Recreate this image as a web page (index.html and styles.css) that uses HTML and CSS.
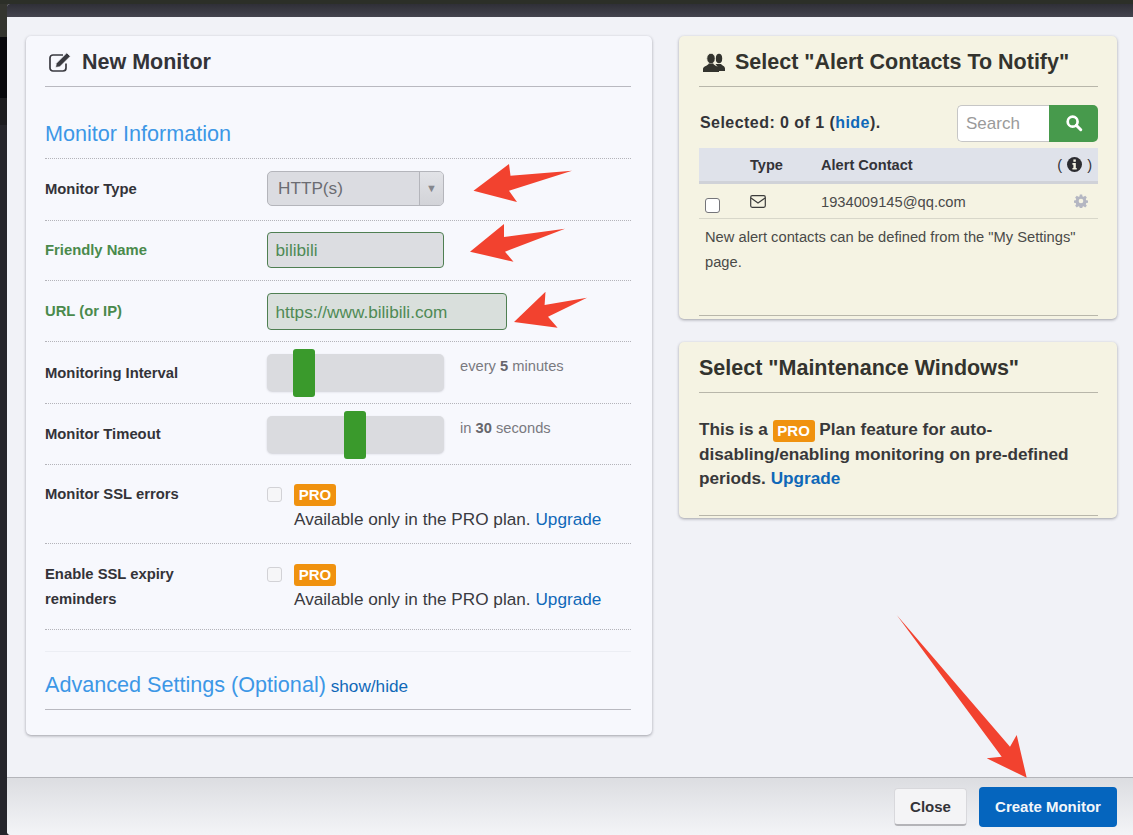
FILE: index.html
```html
<!DOCTYPE html>
<html lang="en">
<head>
<meta charset="utf-8">
<title>New Monitor</title>
<link rel="stylesheet" href="styles.css">
</head>
<body>
<div class="modal">
  <div class="modal-top"></div>
  <div class="modal-body">
    <section class="card card-main">
      <h2 class="card-title">
        <svg class="ic-edit" viewBox="0 0 23 20" width="23" height="20"><path d="M17 11.500V16a3 3 0 0 1-3 3H4a3 3 0 0 1-3-3V6a3 3 0 0 1 3-3h10" fill="none" stroke="#3a3a40" stroke-width="1.700"/><path d="M6.500 15.500l.8-4.200L17.800.8l3.600 3.500L10.800 14.800z" fill="#3a3a40" stroke="#f7f8fd" stroke-width=".8"/></svg>
        New Monitor
      </h2>
      <h3 class="section-title first">Monitor Information</h3>
      <div class="row r62">
        <div class="lbl">Monitor Type</div>
        <div class="select"><span class="select-val">HTTP(s)</span><span class="select-btn">▼</span></div>
      </div>
      <div class="row r60">
        <div class="lbl ok">Friendly Name</div>
        <div class="input w177 h36">bilibili</div>
      </div>
      <div class="row r61">
        <div class="lbl ok">URL (or IP)</div>
        <div class="input w240 h37 tint">https://www.bilibili.com</div>
      </div>
      <div class="row r62">
        <div class="lbl low">Monitoring Interval</div>
        <div class="slider"><span class="thumb" style="left:26px"></span></div>
        <div class="hint">every <b>5</b> minutes</div>
      </div>
      <div class="row r61">
        <div class="lbl">Monitor Timeout</div>
        <div class="slider"><span class="thumb" style="left:77px"></span></div>
        <div class="hint">in <b>30</b> seconds</div>
      </div>
      <div class="row top r79">
        <div class="lbl">Monitor SSL errors</div>
        <span class="check"></span>
        <div class="pro-block"><span class="pro">PRO</span><p>Available only in the PRO plan. <a href="#">Upgrade</a></p></div>
      </div>
      <div class="row top r86">
        <div class="lbl">Enable SSL expiry<br>reminders</div>
        <span class="check"></span>
        <div class="pro-block"><span class="pro">PRO</span><p>Available only in the PRO plan. <a href="#">Upgrade</a></p></div>
      </div>
      <hr class="soft">
      <div class="advanced"><span class="section-title">Advanced Settings (Optional)</span> <a href="#">show/hide</a></div>
    </section>

    <div class="side">
      <section class="card card-cream contacts">
        <h2 class="card-title cream-title">
          <svg viewBox="0 0 22 19" width="22" height="19"><ellipse cx="16" cy="5.500" rx="3.200" ry="4.700" fill="#33332e"/><path d="M12.500 11h5.500c1 1.500 4 2 4 4.500V18h-6l-2-5z" fill="#33332e"/><ellipse cx="8" cy="5.500" rx="4.200" ry="5.200" fill="#33332e" stroke="#f5f3e3" stroke-width=".8"/><path d="M5.700 10.500h4.600c.2 2 5.700 2.700 5.700 5.500v3H0v-3c0-2.800 5.500-3.500 5.700-5.500z" fill="#33332e"/></svg>
          Select "Alert Contacts To Notify"
        </h2>
        <div class="sel-bar">
          <div class="sel-text">Selected: 0 of 1 (<a href="#">hide</a>).</div>
          <div class="search">
            <span class="search-field">Search</span>
            <span class="search-btn"><svg viewBox="0 0 20 20" width="18" height="18"><circle cx="8.500" cy="8.500" r="5.500" fill="none" stroke="#fff" stroke-width="3"/><path d="M12.500 12.500l5 5" stroke="#fff" stroke-width="3.400" stroke-linecap="round"/></svg></span>
          </div>
        </div>
        <div class="thead">
          <span class="c-type">Type</span>
          <span class="c-name">Alert Contact</span>
          <span class="c-info">( <svg viewBox="0 0 16 16" width="15" height="15"><circle cx="8" cy="8" r="8" fill="#2c2c30"/><rect x="6.800" y="2.600" width="2.600" height="2.500" fill="#f4f2e2"/><path d="M5.800 6.500h3.600v5.200h1v1.700H5.800v-1.700h1V8.200h-1z" fill="#f4f2e2"/></svg> )</span>
        </div>
        <div class="trow">
          <span class="box"></span>
          <span class="c-type"><svg viewBox="0 0 16 13" width="16" height="13"><rect x=".7" y=".7" width="14.600" height="11.600" rx="1.500" fill="none" stroke="#3c3c3c" stroke-width="1.200"/><path d="M1 3l7 5 7-5" fill="none" stroke="#3c3c3c" stroke-width="1.200"/></svg></span>
          <span class="c-name email">1934009145@qq.com</span>
          <span class="c-gear"><svg viewBox="0 0 24 24" width="14" height="14"><path d="M10 1h4l.6 3.100 1.900.8 2.700-1.800 2.800 2.800-1.800 2.700.8 1.900 3 .5v4l-3 .6-.8 1.900 1.800 2.700-2.800 2.800-2.700-1.800-1.900.8-.6 3h-4l-.6-3-1.900-.8-2.700 1.800-2.800-2.800 1.800-2.700-.8-1.900-3-.6v-4l3-.5.800-1.900-1.800-2.700 2.800-2.800 2.700 1.800 1.900-.8zM12 8a4 4 0 1 0 0 8 4 4 0 0 0 0-8z" fill="#b4b6c2"/></svg></span>
        </div>
        <p class="note">New alert contacts can be defined from the "My Settings" page.</p>
      </section>

      <section class="card card-cream maint">
        <h2 class="card-title cream-title">Select "Maintenance Windows"</h2>
        <p class="maint-text">This is a <span class="pro inline">PRO</span> Plan feature for auto-disabling/enabling monitoring on pre-defined periods. <a href="#">Upgrade</a></p>
      </section>
    </div>
  </div>
  <div class="modal-foot">
    <button class="btn btn-close">Close</button>
    <button class="btn btn-create">Create Monitor</button>
  </div>
</div>

<svg class="arrows" viewBox="0 0 1133 835" width="1133" height="835">
  <polygon points="473.500,190.700 509,164 510.500,175.700 572,170.700 509,190.700 517,202"/>
  <polygon points="470,251.700 504,224 504,237 565,228.700 505,251.700 513.500,261.700"/>
  <polygon points="514,322 545.500,291.700 544.600,305 587,297.700 548,316.700 557.600,327.700"/>
  <polygon points="896.700,615 1010,746.700 1016.700,735 1026.700,777.700 986.700,758.300 1001.700,756.700"/>
</svg>
</body>
</html>
```

FILE: styles.css
```css
* { box-sizing: border-box; }
html, body { margin: 0; height: 835px; overflow: hidden; }
body {
  position: relative;
  background: linear-gradient(#2c2f28 4px, #34352f 4px, #34352f 37px, #08080c 37px, #08080c 98px, #1c1c1f 98px, #1c1c1f 125px, #25252b 125px);
  font-family: "Liberation Sans", Arial, sans-serif;
  color: #333338;
}
a { color: #0f68b8; text-decoration: none; }
p { margin: 0; }

.modal {
  height: 831px;
  margin: 4px 0 0 7px;
  display: flex;
  flex-direction: column;
  background: #f1f2f7;
  border-radius: 3px 0 0 4px;
  overflow: hidden;
}
.modal-top {
  height: 13px;
  background: linear-gradient(#2f2f37, #44444e);
}
.modal-body {
  flex: 1;
  display: flex;
  align-items: flex-start;
  gap: 27px;
  padding: 19px 16px 0 19px;
}
.card {
  border-radius: 5px;
  box-shadow: 0 1px 3px rgba(60, 60, 70, .45);
}
.card-main {
  width: 626px;
  height: 699px;
  padding: 0 21px 0 19px;
  background: #f7f8fd;
}
.card-title {
  display: flex;
  align-items: center;
  gap: 10px;
  height: 51px;
  margin: 0;
  padding: 2px 0 0 4px;
  border-bottom: 1px solid #b9b9c0;
  font-size: 21.500px;
  font-weight: 700;
  color: #333338;
}
.section-title {
  font-size: 21.600px;
  font-weight: 400;
  color: #3c97e6;
}
.section-title.first {
  height: 72px;
  margin: 0;
  padding-top: 34px;
  line-height: 26px;
  border-bottom: 1px dotted #b4b4ba;
}
.row {
  display: flex;
  align-items: center;
  border-bottom: 1px dotted #b4b4ba;
}
.row.top { align-items: flex-start; padding-top: 20px; }
.row.r79 { padding-top: 19px; }
.row.top .lbl { margin-top: -2px; }
.r60 { height: 60px; }
.r61 { height: 61px; }
.r62 { height: 62px; }
.r79 { height: 79px; }
.r86 { height: 86px; }
.lbl {
  flex: none;
  width: 222px;
  font-size: 14.800px;
  font-weight: 700;
  line-height: 25px;
  color: #333338;
}
.lbl.ok { color: #4a8a4c; }
.lbl.low { margin-top: 2px; }
.select {
  display: flex;
  width: 177px;
  height: 35px;
  margin-bottom: 2px;
  border: 1px solid #b4b5bb;
  border-radius: 5px;
  background: #dbdce1;
  color: #6b6c72;
  font-size: 17.200px;
  overflow: hidden;
}
.select-val { flex: 1; padding-left: 10px; line-height: 32px; }
.select-btn {
  width: 24px;
  border-left: 1px solid #b4b5bb;
  background: linear-gradient(#e2e3e7, #d2d3d8);
  color: #85868c;
  font-size: 11px;
  line-height: 33px;
  text-align: center;
}
.input {
  border: 1px solid #4f7f52;
  border-radius: 4px;
  background: #dcdde1;
  color: #4f8a55;
  font-size: 17.200px;
  padding-left: 7.500px;
}
.w177 { width: 177px; }
.w240 { width: 240px; }
.h36 { height: 36px; line-height: 35px; margin-bottom: 2px; }
.h37 { height: 37px; line-height: 36px; }
.tint { background: #d9dfdc; }
.slider {
  position: relative;
  flex: none;
  width: 177px;
  height: 37px;
  border-radius: 5px;
  background: #dadbdf;
  box-shadow: 0 1px 2px rgba(120, 120, 130, .3);
}
.thumb {
  position: absolute;
  top: -5px;
  width: 22px;
  height: 48px;
  border-radius: 3px;
  background: #3a9a2c;
}
.hint {
  align-self: flex-start;
  margin: 16px 0 0 16px;
  font-size: 14.700px;
  color: #7a7a80;
}
.hint b { color: #66666c; }
.check {
  flex: none;
  width: 15px;
  height: 15px;
  margin: 3px 12px 0 0;
  border: 1px solid #d2d2d6;
  border-radius: 3px;
  background: #f6f6f8;
}
.pro-block { font-size: 17.200px; line-height: 24px; color: #3a3a40; }
.pro-block p { margin-top: 1px; }
.pro {
  display: block;
  width: 42px;
  height: 22px;
  border-radius: 3px;
  background: #f0920f;
  color: #fff;
  font-size: 15px;
  font-weight: 700;
  line-height: 22px;
  text-align: center;
}
.pro.inline { display: inline-block; vertical-align: -1px; }
.soft { height: 1px; margin: 21px 0 0; border: 0; background: #eceef4; }
.advanced {
  height: 58px;
  padding-top: 18px;
  border-bottom: 1px solid #b9b9c0;
  line-height: 30px;
  font-size: 17.200px;
}

.side {
  flex: none;
  width: 438px;
  display: flex;
  flex-direction: column;
  gap: 23px;
}
.card-cream {
  padding: 0 19px 0 20px;
  background: #f5f3e3;
}
.cream-title { padding-left: 0; color: #33332e; border-bottom-color: #b8b6aa; }
.contacts { height: 283px; position: relative; }
.contacts::after, .maint::after {
  content: "";
  position: absolute;
  left: 20px;
  right: 19px;
  height: 1px;
  background: #b8b6aa;
}
.contacts::after { bottom: 3px; }
.maint::after { bottom: 2px; }
.maint { height: 176px; position: relative; }
.contacts .cream-title { padding-left: 4px; }
.sel-bar {
  display: flex;
  align-items: center;
  justify-content: space-between;
  height: 61px;
  padding: 11px 0 0 1px;
}
.sel-text { font-size: 16px; font-weight: 700; letter-spacing: .45px; color: #333338; }
.search { display: flex; height: 37px; }
.search-field {
  width: 92px;
  padding-left: 8px;
  border: 1px solid #c6c6c6;
  border-right: 0;
  border-radius: 5px 0 0 5px;
  background: #fff;
  color: #9a9a9a;
  font-size: 17px;
  line-height: 35px;
}
.search-btn {
  display: flex;
  align-items: center;
  justify-content: center;
  width: 49px;
  border-radius: 0 5px 5px 0;
  background: #479a4c;
}
.thead {
  display: flex;
  align-items: center;
  height: 36px;
  border-bottom: 3px solid #d0d2d8;
  background: #dfe2ea;
  font-size: 14.600px;
  font-weight: 700;
  color: #333338;
}
.c-type { flex: none; width: 71px; margin-left: 51px; }
.thead .c-name { flex: 1; }
.c-info { display: flex; align-items: center; gap: 5px; padding-right: 6px; font-weight: 400; }
.trow {
  display: flex;
  align-items: center;
  height: 35px;
  padding-top: 1px;
  border-bottom: 1px solid #d8d7ca;
  position: relative;
}
.box {
  position: absolute;
  left: 6px;
  top: 14px;
  width: 15px;
  height: 15px;
  border: 1px solid #75757a;
  border-radius: 3px;
  background: #fff;
}
.email { flex: 1; font-size: 14.700px; color: #4a4a4a; }
.trow svg { display: block; }
.c-gear { padding-right: 10px; margin-top: -2px; }
.note {
  padding: 6px 6px 0;
  font-size: 14.700px;
  line-height: 25px;
  color: #4a4a48;
}
.maint-text {
  margin-top: 24px;
  font-size: 17.200px;
  font-weight: 700;
  line-height: 24.400px;
  color: #38383a;
}

.modal-foot {
  flex: none;
  height: 58px;
  display: flex;
  align-items: center;
  justify-content: flex-end;
  gap: 12px;
  padding: 0 16px 0 0;
  border-top: 1px solid #b4b5ba;
  background: linear-gradient(#dcdde1, #f3f4f7);
}
.btn {
  font-family: inherit;
  font-size: 15px;
  font-weight: 700;
  border-radius: 4px;
}
.btn-close {
  width: 73px;
  height: 38px;
  border: 1px solid #d8d8dc;
  border-bottom: 2px solid #b4b4b8;
  background: #f4f4f6;
  color: #333338;
}
.btn-create {
  width: 138px;
  height: 40px;
  border: 0;
  background: #0565be;
  color: #f2f6fa;
}
.arrows {
  position: absolute;
  left: 0;
  top: 0;
  fill: #f2422f;
  pointer-events: none;
}
```
